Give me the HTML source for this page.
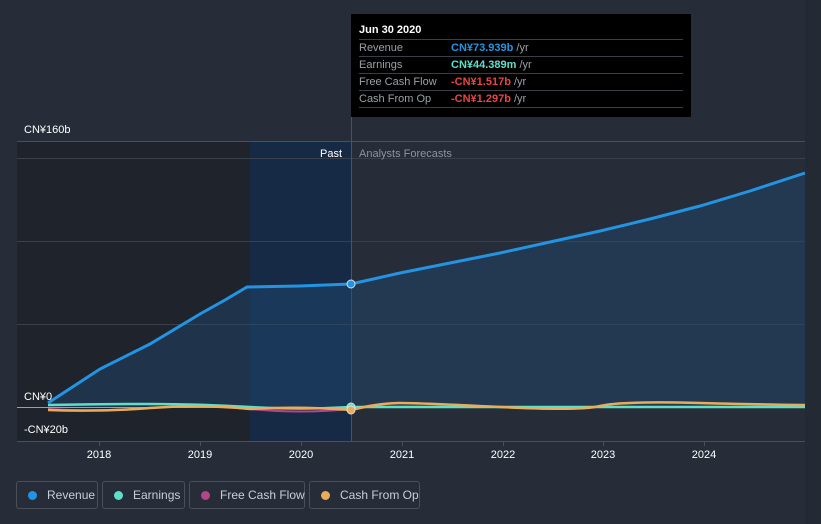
<!DOCTYPE html>
<html><head><meta charset="utf-8"><style>
*{margin:0;padding:0;box-sizing:border-box}
body{width:821px;height:524px;background:#262d38;font-family:"Liberation Sans",sans-serif;position:relative;overflow:hidden}
.tt{position:absolute;left:351px;top:14px;width:340px;height:103px;background:#000;padding:9px 8px 0 8px;font-size:11px}
.tt .h{color:#fff;font-weight:bold;font-size:11px;height:17px;border-bottom:1px solid #3a3f47;padding-top:1px}
.tt .r{height:17px;border-bottom:1px solid #3a3f47;color:#9aa0a8;display:flex;align-items:center}
.tt .r span.l{width:92px}
.leg{position:absolute;top:481px;height:28px;border:1px solid #4a505a;border-radius:3px;color:#c9ced6;font-size:12px;display:flex;align-items:center;padding-left:11px;white-space:nowrap}
.leg i{width:9px;height:9px;border-radius:50%;display:inline-block;margin-right:10px;flex:none}
svg text{font-family:"Liberation Sans",sans-serif}
</style></head><body>
<svg width="821" height="524" style="position:absolute;left:0;top:0">
<rect x="805" y="0" width="16" height="524" fill="#242a34"/>
<rect x="17" y="141" width="233" height="300" fill="#1f232b"/>
<rect x="250" y="141" width="101" height="300" fill="#172a45"/>
<g stroke="#3a404b" stroke-width="1">
<line x1="17" y1="141.5" x2="805" y2="141.5" stroke="#4a505a"/>
<line x1="17" y1="158.5" x2="805" y2="158.5"/>
<line x1="17" y1="241.5" x2="805" y2="241.5"/>
<line x1="17" y1="324.5" x2="805" y2="324.5"/>
<line x1="17" y1="441.5" x2="805" y2="441.5" stroke="#4a505a"/>
</g>
<line x1="351.5" y1="14" x2="351.5" y2="441" stroke="#2b5a8f"/>
<path d="M48,403 L100,369 L150,344 L200,314 L225,300 L247,287 L300,286 L351,284 L400,273 L450,263 L500,253 L550,242 L600,231 L650,219 L700,206 L750,191 L805,173 L805,407 L48,407 Z" fill="#1e4a72" fill-opacity="0.45"/>
<line x1="17" y1="407.5" x2="805" y2="407.5" stroke="#9aa0a8"/>
<path d="M48,409 Q100,412 150,408 T250,409 T351,409 Q380,403 400,403 T500,407 T600,406 T700,403 T805,405" fill="none" stroke="#b0478a" stroke-width="2"/>
<path d="M48,405 Q100,404 150,404 T250,407 T351,407 L805,407" fill="none" stroke="#5ee0c8" stroke-width="2.5"/>
<path d="M48,410 Q100,412 150,408 T250,409 Q300,406 351,410 Q380,403 400,403 T500,407 T600,406 T700,403 T805,405" fill="none" stroke="#e9ad5a" stroke-width="2.5"/>
<path d="M48,403 L100,369 L150,344 L200,314 L225,300 L247,287 L300,286 L351,284 L400,273 L450,263 L500,253 L550,242 L600,231 L650,219 L700,206 L750,191 L805,173" fill="none" stroke="#2394e3" stroke-width="3"/>
<circle cx="351" cy="284" r="4" fill="#2394e3" stroke="#cfe3f5" stroke-width="1"/>
<circle cx="351" cy="407" r="4" fill="#5ee0c8" stroke="#ddd" stroke-width="1"/>
<circle cx="351" cy="410" r="4" fill="#e9ad5a" stroke="#ddd" stroke-width="1"/>
<g fill="#fff" font-size="11">
<text x="24" y="133">CN¥160b</text>
<text x="24" y="400">CN¥0</text>
<text x="24" y="433">-CN¥20b</text>
<text x="342" y="157" text-anchor="end">Past</text>
<text x="359" y="157" fill="#8e949c">Analysts Forecasts</text>
</g>
<g stroke="#4a505a"><line x1="99.5" y1="441" x2="99.5" y2="446"/><line x1="200.5" y1="441" x2="200.5" y2="446"/><line x1="301.5" y1="441" x2="301.5" y2="446"/><line x1="402.5" y1="441" x2="402.5" y2="446"/><line x1="503.5" y1="441" x2="503.5" y2="446"/><line x1="603.5" y1="441" x2="603.5" y2="446"/><line x1="704.5" y1="441" x2="704.5" y2="446"/></g>
<g fill="#fff" font-size="11" text-anchor="middle">
<text x="99" y="458">2018</text><text x="200" y="458">2019</text><text x="301" y="458">2020</text><text x="402" y="458">2021</text><text x="503" y="458">2022</text><text x="603" y="458">2023</text><text x="704" y="458">2024</text>
</g>
</svg>
<div class="tt">
<div class="h">Jun 30 2020</div>
<div class="r"><span class="l">Revenue</span><span style="color:#2394e3;font-weight:bold">CN¥73.939b</span>&nbsp;/yr</div>
<div class="r"><span class="l">Earnings</span><span style="color:#5ee0c8;font-weight:bold">CN¥44.389m</span>&nbsp;/yr</div>
<div class="r"><span class="l">Free Cash Flow</span><span style="color:#e84545;font-weight:bold">-CN¥1.517b</span>&nbsp;/yr</div>
<div class="r"><span class="l">Cash From Op</span><span style="color:#e84545;font-weight:bold">-CN¥1.297b</span>&nbsp;/yr</div>
</div>
<div class="leg" style="left:16px;width:82px"><i style="background:#2394e3"></i>Revenue</div>
<div class="leg" style="left:102px;width:83px"><i style="background:#5ee0c8"></i>Earnings</div>
<div class="leg" style="left:189px;width:116px"><i style="background:#b0478a"></i>Free Cash Flow</div>
<div class="leg" style="left:309px;width:111px"><i style="background:#e9ad5a"></i>Cash From Op</div>
</body></html>
